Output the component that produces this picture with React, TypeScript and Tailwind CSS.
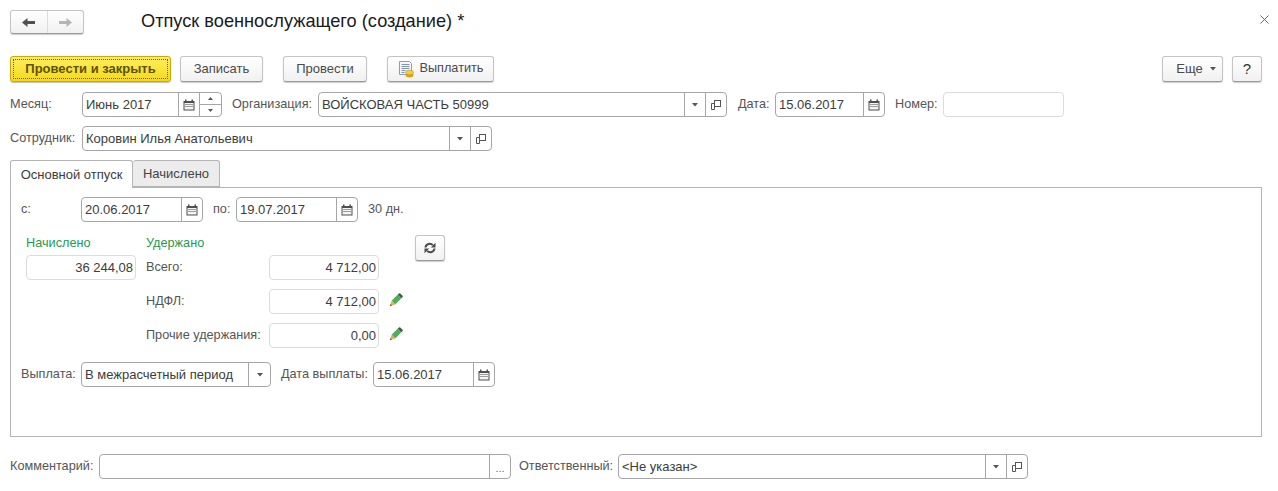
import React from "react"

const fieldText = "text-[#3c3c3c]"
const labelText = "text-[#555555] text-[12.700px]"

function Triangle() {
  return (
    <svg width="6" height="4" viewBox="0 0 6 4">
      <path d="M0 0h6L3 3.500z" fill="#555" />
    </svg>
  )
}

function CalendarIcon() {
  return (
    <svg width="12" height="12" viewBox="0 0 12 12">
      <path d="M2 0.5h1.5V2h5V0.5H10V2h1.5v9.5H.5V2H2z" fill="#4f4f4f" />
      <rect x="1.500" y="4" width="9" height="6.500" fill="#f4f4f4" />
      <path d="M2.500 5h1v1h-1zM4.500 5h1v1h-1zM6.500 5h1v1h-1zM8.500 5h1v1h-1zM2.500 7h1v1h-1zM4.500 7h1v1h-1zM6.500 7h1v1h-1zM8.500 7h1v1h-1z" fill="#444" />
    </svg>
  )
}

function OpenIcon() {
  return (
    <svg width="12" height="12" viewBox="0 0 12 12" fill="none" stroke="#555">
      <rect x="4.500" y="1.500" width="6" height="6" />
      <path d="M4.500 4.500h-3v6h3v-3" />
    </svg>
  )
}

function RefreshIcon() {
  return (
    <svg width="12" height="12" viewBox="0 0 12 12" fill="#4a4a4a">
      <path d="M1.500 5.500a4.200 4.200 0 0 1 7.300-2.300" fill="none" stroke="#4a4a4a" strokeWidth="2" />
      <path d="M11.500 .8v4.700H6.800z" />
      <path d="M10.500 6.500a4.200 4.200 0 0 1-7.300 2.300" fill="none" stroke="#4a4a4a" strokeWidth="2" />
      <path d="M.5 11.200V6.500h4.700z" />
    </svg>
  )
}

function SpinCell() {
  return (
    <div className="flex flex-col w-[22px] border-l border-[#a6a6a6]">
      <div className="flex-1 flex items-center justify-center border-b border-[#a6a6a6]">
        <svg width="5" height="3" viewBox="0 0 5 3">
          <path d="M0 3h5L2.500 0z" fill="#555" />
        </svg>
      </div>
      <div className="flex-1 flex items-center justify-center">
        <svg width="5" height="3" viewBox="0 0 5 3">
          <path d="M0 0h5L2.500 3z" fill="#555" />
        </svg>
      </div>
    </div>
  )
}

function Cell({ children, className = "w-[21px]" }: { children: React.ReactNode; className?: string }) {
  return (
    <div className={`flex items-center justify-center border-l border-[#a6a6a6] ${className}`}>
      {children}
    </div>
  )
}

interface FieldProps {
  width: string
  value?: string
  children?: React.ReactNode
}

// обычное поле ввода с кнопками справа
function Field({ width, value, children }: FieldProps) {
  return (
    <div className={`flex h-[25px] shrink-0 rounded-[4px] border border-[#a6a6a6] bg-white ${width}`}>
      <div className={`flex-1 flex items-center pl-[3px] whitespace-nowrap ${fieldText}`}>{value}</div>
      {children}
    </div>
  )
}

function NumberField({ value, width = "w-[110px]" }: { value: string; width?: string }) {
  return (
    <div className={`flex items-center justify-end h-[25px] shrink-0 rounded-[4px] border border-[#dcdcdc] pr-[2px] ${fieldText} ${width}`}>
      {value}
    </div>
  )
}

function Label({ children, className }: { children: React.ReactNode; className: string }) {
  return <div className={`flex items-center h-[25px] shrink-0 whitespace-nowrap ${labelText} ${className}`}>{children}</div>
}

function Button({ children, className }: { children: React.ReactNode; className: string }) {
  return (
    <div className={`flex items-center justify-center h-[26px] shrink-0 rounded-[3px] border border-[#c4c4c4] border-b-[#9a9a9a] bg-gradient-to-b from-white to-[#f1f1f1] shadow-[0_1px_1px_rgba(0,0,0,0.2)] text-[#4a4a4a] ${className}`}>
      {children}
    </div>
  )
}

function PayIcon() {
  return (
    <svg width="17" height="17" viewBox="0 0 17 17" className="mr-[5px]">
      <path d="M1.500 .5h10l2 2v11h-12z" fill="#f5f7fa" stroke="#8d9db3" />
      <path d="M3.500 3.500h8M3.500 5.500h8M3.500 7.500h8M3.500 9.500h4M3.500 11.500h3" stroke="#7f93ad" />
      <ellipse cx="11.500" cy="14" rx="4" ry="2.500" fill="#d9a520" />
      <ellipse cx="11.500" cy="11.500" rx="4" ry="2.300" fill="#f5cf3f" stroke="#c08f12" strokeWidth=".6" />
    </svg>
  )
}

function Pencil() {
  return (
    <svg width="14" height="14" viewBox="0 0 14 14" className="shrink-0">
      <path d="M2.600 7.800 8.800 1.600 12.400 5.200 6.200 11.400z" fill="#4fae5b" />
      <path d="M8.800 1.600 10 .4a1 1 0 0 1 1.200 0l2.400 2.400a1 1 0 0 1 0 1.200l-1.200 1.200z" fill="#3e5a48" />
      <path d="M2.600 7.800 6.200 11.400 .8 13.200z" fill="#e0ae6c" />
      <path d="M1.500 11 3 12.500 .8 13.200z" fill="#7a5a2c" />
    </svg>
  )
}

export default function App() {
  return (
    <div className="w-[1278px] h-[491px] bg-white text-[13px] font-['Liberation_Sans',Arial,sans-serif] pt-[10px] px-[10px] overflow-hidden">
      {/* заголовок */}
      <div className="relative flex items-center h-[24px]">
        <div className="flex h-[24px] w-[74px] rounded-[3px] border border-[#c4c4c4] border-b-[#9a9a9a] bg-gradient-to-b from-white to-[#f1f1f1] shadow-[0_1px_1px_rgba(0,0,0,0.2)]">
          <div className="flex-1 flex items-center justify-center border-r border-[#dddddd]">
            <svg width="15" height="11" viewBox="0 0 15 11">
              <path d="M1 5.500 6.500 1v3h7.500v3H6.500v3z" fill="#505050" />
            </svg>
          </div>
          <div className="flex-1 flex items-center justify-center">
            <svg width="15" height="11" viewBox="0 0 15 11">
              <path d="M14 5.500 8.500 1v3H1v3h7.500v3z" fill="#b5b5b5" />
            </svg>
          </div>
        </div>
        <div className="ml-[57px] text-[18.200px] text-[#1a1a1a] whitespace-nowrap">Отпуск военнослужащего (создание) *</div>
        <svg width="9" height="9" viewBox="0 0 9 9" className="absolute right-[-1px] top-[5px]" fill="none" stroke="#666">
          <path d="M.5.500l8 8M8.500.500l-8 8" />
        </svg>
      </div>

      {/* командная панель */}
      <div className="flex mt-[22px] w-[1252px]">
        <div className="flex items-center justify-center h-[26px] w-[161px] shrink-0 rounded-[3px] border border-[#c9a90a] bg-gradient-to-b from-[#ffee58] to-[#f5d90f] shadow-[0_1px_1px_rgba(0,0,0,0.25)] p-[2px]">
          <div className="flex items-center justify-center w-full h-full border border-dotted border-[#6b5d00] font-bold text-[#5c5200]">
            Провести и закрыть
          </div>
        </div>
        <Button className="w-[83px] ml-[9px]">Записать</Button>
        <Button className="w-[84px] ml-[20px]">Провести</Button>
        <Button className="w-[107px] ml-[20px] text-[12.700px]">
          <PayIcon />
          Выплатить
        </Button>
        <Button className="w-[61px] ml-auto">
          <span className="ml-[7px] mr-[7px]">Еще</span>
          <Triangle />
        </Button>
        <Button className="w-[30px] ml-[9px] text-[15px] text-[#333333]">?</Button>
      </div>

      {/* шапка документа */}
      <div className="flex mt-[10px]">
        <Label className="w-[72px]">Месяц:</Label>
        <Field width="w-[140px]" value="Июнь 2017">
          <Cell><CalendarIcon /></Cell>
          <SpinCell />
        </Field>
        <Label className="w-[86px] ml-[10px]">Организация:</Label>
        <Field width="w-[409px]" value="ВОЙСКОВАЯ ЧАСТЬ 50999">
          <Cell><Triangle /></Cell>
          <Cell><OpenIcon /></Cell>
        </Field>
        <Label className="w-[37px] ml-[11px]">Дата:</Label>
        <Field width="w-[110px]" value="15.06.2017">
          <Cell><CalendarIcon /></Cell>
        </Field>
        <Label className="w-[48px] ml-[10px]">Номер:</Label>
        <div className="w-[121px] h-[25px] rounded-[4px] border border-[#dcdcdc]" />
      </div>

      <div className="flex mt-[9px]">
        <Label className="w-[72px]">Сотрудник:</Label>
        <Field width="w-[410px]" value="Коровин Илья Анатольевич">
          <Cell><Triangle /></Cell>
          <Cell><OpenIcon /></Cell>
        </Field>
      </div>

      {/* вкладки */}
      <div className="flex mt-[9px] h-[27px] relative z-10">
        <div className="flex items-center justify-center w-[123px] h-[28px] rounded-t-[3px] border border-b-0 border-[#b4b4b4] bg-white text-[#3c3c3c]">
          Основной отпуск
        </div>
        <div className="flex items-center justify-center w-[87px] h-[27px] rounded-t-[3px] border border-l-0 border-[#b4b4b4] bg-[#ececec] text-[#444444]">
          Начислено
        </div>
      </div>

      <div className="h-[250px] w-[1252px] border border-[#b4b4b4] pl-[10px] pt-[9px]">
        <div className="flex">
          <Label className="w-[60px]">с:</Label>
          <Field width="w-[122px]" value="20.06.2017">
            <Cell><CalendarIcon /></Cell>
          </Field>
          <Label className="w-[23px] ml-[10px]">по:</Label>
          <Field width="w-[122px]" value="19.07.2017">
            <Cell><CalendarIcon /></Cell>
          </Field>
          <Label className="ml-[10px]">30 дн.</Label>
        </div>

        <div className="flex items-start mt-[13px] pl-[5px]">
          <div className="w-[120px]">
            <div className="h-[20px] pb-[3px] flex items-center text-[#1f9a52] text-[12.700px]">Начислено</div>
            <NumberField value="36 244,08" />
          </div>
          <div className="w-[269px]">
            <div className="h-[20px] pb-[3px] flex items-center text-[#1f9a52] text-[12.700px]">Удержано</div>
            <div className="flex flex-col gap-[9px]">
              <div className="flex items-center">
                <Label className="w-[123px]">Всего:</Label>
                <NumberField value="4 712,00" />
              </div>
              <div className="flex items-center">
                <Label className="w-[123px]">НДФЛ:</Label>
                <NumberField value="4 712,00" />
                <div className="ml-[10px] mb-[4px]"><Pencil /></div>
              </div>
              <div className="flex items-center">
                <Label className="w-[123px]">Прочие удержания:</Label>
                <NumberField value="0,00" />
                <div className="ml-[10px] mb-[4px]"><Pencil /></div>
              </div>
            </div>
          </div>
          <Button className="w-[30px]">
            <RefreshIcon />
          </Button>
        </div>

        <div className="flex mt-[14px]">
          <Label className="w-[60px]">Выплата:</Label>
          <Field width="w-[190px]" value="В межрасчетный период">
            <Cell className="w-[22px]"><Triangle /></Cell>
          </Field>
          <Label className="w-[92px] ml-[10px]">Дата выплаты:</Label>
          <Field width="w-[122px]" value="15.06.2017">
            <Cell><CalendarIcon /></Cell>
          </Field>
        </div>
      </div>

      {/* подвал */}
      <div className="flex mt-[17px]">
        <Label className="w-[89px]">Комментарий:</Label>
        <Field width="w-[412px]">
          <Cell><span className="text-[#666666] text-[11px] leading-none mt-[4px]">...</span></Cell>
        </Field>
        <Label className="w-[99px] ml-[8px]">Ответственный:</Label>
        <Field width="w-[410px]" value="<Не указан>">
          <Cell><Triangle /></Cell>
          <Cell><OpenIcon /></Cell>
        </Field>
      </div>
    </div>
  )
}
